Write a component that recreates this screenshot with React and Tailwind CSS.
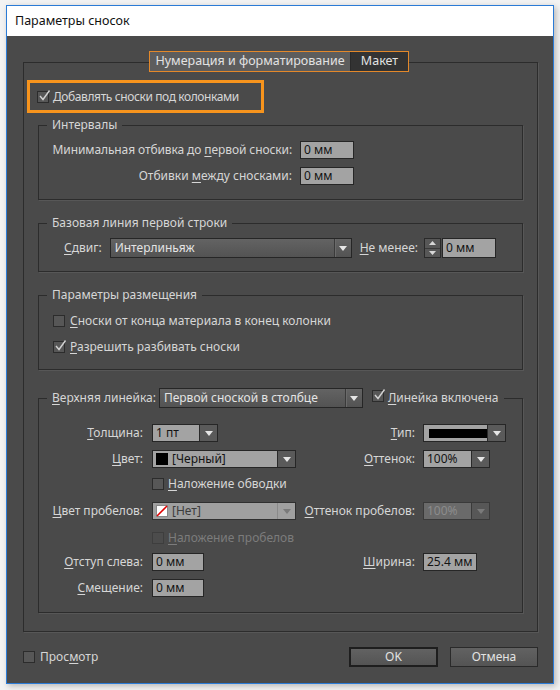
import React from 'react'

function U({ children }) {
  return <span className="underline underline-offset-2 decoration-1">{children}</span>
}

function Tri({ dim }) {
  return (
    <svg width="8" height="5" viewBox="0 0 8 5">
      <path d="M0 0H8L4 5Z" fill={dim ? '#7a7a7a' : '#e6e6e6'} />
    </svg>
  )
}

function Check({ checked, disabled }) {
  return (
    <span
      className={
        'relative inline-block w-[12px] h-[12px] shrink-0 border ' +
        (disabled ? 'border-[#3e3e3e] bg-[#4c4c4c]' : 'border-[#2c2c2c] bg-[#575757]')
      }
    >
      {checked && (
        <svg className="absolute -top-[3px] left-[0px] w-[13px] h-[13px]" viewBox="0 0 13 13">
          <path d="M2 7 L5 10.5 L11.5 1.5" stroke="#d2d2d2" strokeWidth="1.4" fill="none" />
        </svg>
      )}
    </span>
  )
}

function Field({ w, children, disabled }) {
  return (
    <div
      className={
        'h-[18px] border pl-[3px] leading-[16px] ' +
        (disabled ? 'border-[#3a3a3a] bg-[#6a6a6a] text-[#8c8c8c]' : 'border-[#262626] bg-[#a3a3a3] text-[#141414]')
      }
      style={{ width: w }}
    >
      {children}
    </div>
  )
}

function Combo({ w, children, disabled }) {
  return (
    <div
      className={
        'flex h-[18px] border ' + (disabled ? 'border-[#3a3a3a]' : 'border-[#262626]')
      }
      style={{ width: w }}
    >
      <div
        className={
          'flex-1 flex items-center pl-[3px] gap-[4px] ' +
          (disabled ? 'bg-[#6a6a6a] text-[#8c8c8c]' : 'bg-[#a3a3a3] text-[#141414]')
        }
      >
        {children}
      </div>
      <div
        className={
          'w-[18px] flex items-center justify-center border-l ' +
          (disabled ? 'border-[#3a3a3a] bg-[#575757]' : 'border-[#2a2a2a] bg-[#5a5a5a]')
        }
      >
        <Tri dim={disabled} />
      </div>
    </div>
  )
}

function DarkSelect({ w, children }) {
  return (
    <div
      className="flex h-[20px] border border-[#262626] bg-gradient-to-b from-[#636363] to-[#535353] text-[#e4e4e4]"
      style={{ width: w }}
    >
      <span className="flex-1 pl-[4px] leading-[18px]">{children}</span>
      <span className="w-[17px] flex items-center justify-center border-l border-[#3a3a3a] shadow-[inset_1px_0_0_#6a6a6a]">
        <Tri />
      </span>
    </div>
  )
}

function Row({ className, children }) {
  return <div className={'flex items-center h-[18px] ' + (className || '')}>{children}</div>
}

const fs = 'mx-[14px] border border-[#2c2c2c] shadow-[1px_1px_0_#575757]'

export default function App() {
  return (
    <div className="w-[560px] h-[690px] bg-[#f3f3f3] pt-[5px] pl-[6px] font-['Noto_Sans',sans-serif] text-[12px]">
      <div className="w-[548px] h-[679px] border border-[#2b7bd6] flex flex-col shadow-[2px_2px_6px_rgba(0,0,0,0.25)]">
        {/* title */}
        <div className="h-[30px] bg-white pl-[8px] flex items-center text-[#111] text-[12.5px]">Параметры сносок</div>

        <div className="flex-1 bg-[#4a4a4a] text-[#d6d6d6]">
          {/* tab panel */}
          <div className="ml-[16px] mt-[26px] w-[515px] border border-[#2c2c2c] shadow-[1px_1px_0_#575757] pb-[18px]">
            <div className="-mt-[12px] ml-[125px] flex h-[21px] w-[260px] border border-[#e3882a] text-[12.5px] text-[#e2e2e2]">
              <div className="w-[201px] bg-[#5d5d5d] border-r border-[#2a2a2a] flex items-center justify-center">
                Нумерация и форматирование
              </div>
              <div className="flex-1 bg-[#333333] flex items-center justify-center">Макет</div>
            </div>

            <div className="mt-[8px] ml-[3px] w-[237px] h-[33px] border-[3px] border-[#f7941d] flex items-center pl-[7px] gap-[4px]">
              <Check checked />
              <span className="tracking-[-0.4px]">Добавлять сноски под колонками</span>
            </div>

            {/* Интервалы */}
            <fieldset className={fs + ' mt-[4px] pb-[14px]'}>
              <legend className="ml-[8px] px-[5px] leading-[16px]">Интервалы</legend>
              <Row className="mt-[8px]">
                <span className="w-[253px] text-right tracking-[-0.1px]">
                  Минимальная отбивка до <U>п</U>ервой сноски:
                </span>
                <div className="ml-[8px]">
                  <Field w={54}>0 мм</Field>
                </div>
              </Row>
              <Row className="mt-[8px]">
                <span className="w-[253px] text-right">
                  Отбивки <U>м</U>ежду сносками:
                </span>
                <div className="ml-[8px]">
                  <Field w={54}>0 мм</Field>
                </div>
              </Row>
            </fieldset>

            {/* Базовая линия */}
            <fieldset className={fs + ' mt-[15px] pb-[13px]'}>
              <legend className="ml-[8px] px-[5px] leading-[16px]">Базовая линия первой строки</legend>
              <div className="mt-[7px] flex items-center h-[20px] pl-[25px]">
                <span>
                  <U>С</U>двиг:
                </span>
                <div className="ml-[8px]">
                  <DarkSelect w={242}>Интерлиньяж</DarkSelect>
                </div>
                <span className="ml-[8px]">
                  <U>Н</U>е менее:
                </span>
                <div className="ml-[6px] w-[17px] h-[20px] border border-[#2a2a2a] bg-[#575757] flex flex-col">
                  <div className="flex-1 flex items-center justify-center border-b border-[#3a3a3a]">
                    <svg width="7" height="4" viewBox="0 0 7 4">
                      <path d="M0 4H7L3.5 0Z" fill="#d8d8d8" />
                    </svg>
                  </div>
                  <div className="flex-1 flex items-center justify-center">
                    <svg width="7" height="4" viewBox="0 0 7 4">
                      <path d="M0 0H7L3.5 4Z" fill="#d8d8d8" />
                    </svg>
                  </div>
                </div>
                <div className="ml-[1px] h-[20px] w-[54px] border border-[#262626] bg-[#a3a3a3] text-[#141414] pl-[3px] leading-[18px]">
                  0 мм
                </div>
              </div>
            </fieldset>

            {/* Параметры размещения */}
            <fieldset className={fs + ' mt-[15px] pb-[13px]'}>
              <legend className="ml-[8px] px-[5px] leading-[16px]">Параметры размещения</legend>
              <Row className="mt-[9px] pl-[14px] gap-[5px]">
                <Check />
                <span>
                  <U>С</U>носки от конца материала в конец колонки
                </span>
              </Row>
              <Row className="mt-[8px] pl-[14px] gap-[5px]">
                <Check checked />
                <span>
                  <U>Р</U>азрешить разбивать сноски
                </span>
              </Row>
            </fieldset>

            {/* Верхняя линейка */}
            <fieldset className={fs + ' mt-[18px] pb-[15px]'}>
              <legend className="ml-[8px] pl-[5px] pr-[6px]">
                <div className="flex items-center h-[20px]">
                  <span>
                    <U>В</U>ерхняя линейка:
                  </span>
                  <div className="ml-[3px]">
                    <DarkSelect w={204}>Первой сноской в столбце</DarkSelect>
                  </div>
                  <div className="ml-[9px]">
                    <Check checked />
                  </div>
                  <span className="ml-[4px]">
                    <U>Л</U>инейка включена
                  </span>
                </div>
              </legend>

              <Row className="mt-[16px]">
                <span className="w-[104px] text-right">
                  <U>Т</U>олщина:
                </span>
                <div className="w-[157px] pl-[9px]">
                  <Combo w={66}>1 пт</Combo>
                </div>
                <span className="w-[115px] text-right">
                  <U>Т</U>ип:
                </span>
                <div className="ml-[8px]">
                  <Combo w={83}>
                    <span className="w-[58px] h-[9px] bg-black ml-[2px]" />
                  </Combo>
                </div>
              </Row>

              <Row className="mt-[8px]">
                <span className="w-[104px] text-right">
                  <U>Ц</U>вет:
                </span>
                <div className="w-[157px] pl-[9px]">
                  <Combo w={144}>
                    <span className="w-[12px] h-[12px] bg-black" />
                    <span>[Черный]</span>
                  </Combo>
                </div>
                <span className="w-[115px] text-right">
                  <U>О</U>ттенок:
                </span>
                <div className="ml-[8px]">
                  <Combo w={67}>100%</Combo>
                </div>
              </Row>

              <Row className="mt-[7px] pl-[113px] gap-[4px]">
                <Check />
                <span>
                  <U>Н</U>аложение обводки
                </span>
              </Row>

              <Row className="mt-[9px]">
                <span className="w-[104px] text-right">
                  <U>Ц</U>вет пробелов:
                </span>
                <div className="w-[157px] pl-[9px]">
                  <div className="flex h-[18px] w-[144px] border border-[#303030]">
                    <div className="flex-1 flex items-center pl-[3px] gap-[4px] bg-[#a0a0a0] text-[#3c3c3c]">
                      <svg width="12" height="12" viewBox="0 0 12 12">
                        <rect x="0.5" y="0.5" width="11" height="11" fill="#fff" stroke="#888" />
                        <path d="M1 11 L11 1" stroke="#e00000" strokeWidth="1.6" />
                      </svg>
                      <span>[Нет]</span>
                    </div>
                    <div className="w-[18px] flex items-center justify-center bg-[#a0a0a0] border-l border-[#8a8a8a]">
                      <Tri dim />
                    </div>
                  </div>
                </div>
                <span className="w-[115px] text-right">
                  <U>О</U>ттенок пробелов:
                </span>
                <div className="ml-[8px]">
                  <Combo w={67} disabled>
                    100%
                  </Combo>
                </div>
              </Row>

              <Row className="mt-[9px] pl-[113px] gap-[4px] text-[#7c7c7c]">
                <Check disabled />
                <span>
                  <U>Н</U>аложение пробелов
                </span>
              </Row>

              <Row className="mt-[6px]">
                <span className="w-[104px] text-right">
                  <U>О</U>тступ слева:
                </span>
                <div className="w-[157px] pl-[9px]">
                  <Field w={52}>0 мм</Field>
                </div>
                <span className="w-[115px] text-right">
                  <U>Ш</U>ирина:
                </span>
                <div className="ml-[8px]">
                  <Field w={54}>25.4 мм</Field>
                </div>
              </Row>

              <Row className="mt-[8px]">
                <span className="w-[104px] text-right">
                  <U>С</U>мещение:
                </span>
                <div className="w-[157px] pl-[9px]">
                  <Field w={52}>0 мм</Field>
                </div>
              </Row>
            </fieldset>
          </div>

          {/* bottom bar */}
          <div className="mt-[15px] ml-[16px] flex items-center h-[20px] w-[515px]">
            <Check />
            <span className="ml-[5px]">
              Прос<U>м</U>отр
            </span>
            <div className="ml-auto w-[89px] h-[20px] border-2 border-[#1e1e1e] bg-gradient-to-b from-[#626262] to-[#545454] flex items-center justify-center text-[#e2e2e2]">
              OK
            </div>
            <div className="ml-[12px] w-[88px] h-[20px] border border-[#2a2a2a] bg-gradient-to-b from-[#626262] to-[#545454] flex items-center justify-center text-[#e2e2e2]">
              Отмена
            </div>
          </div>
        </div>
      </div>
    </div>
  )
}
